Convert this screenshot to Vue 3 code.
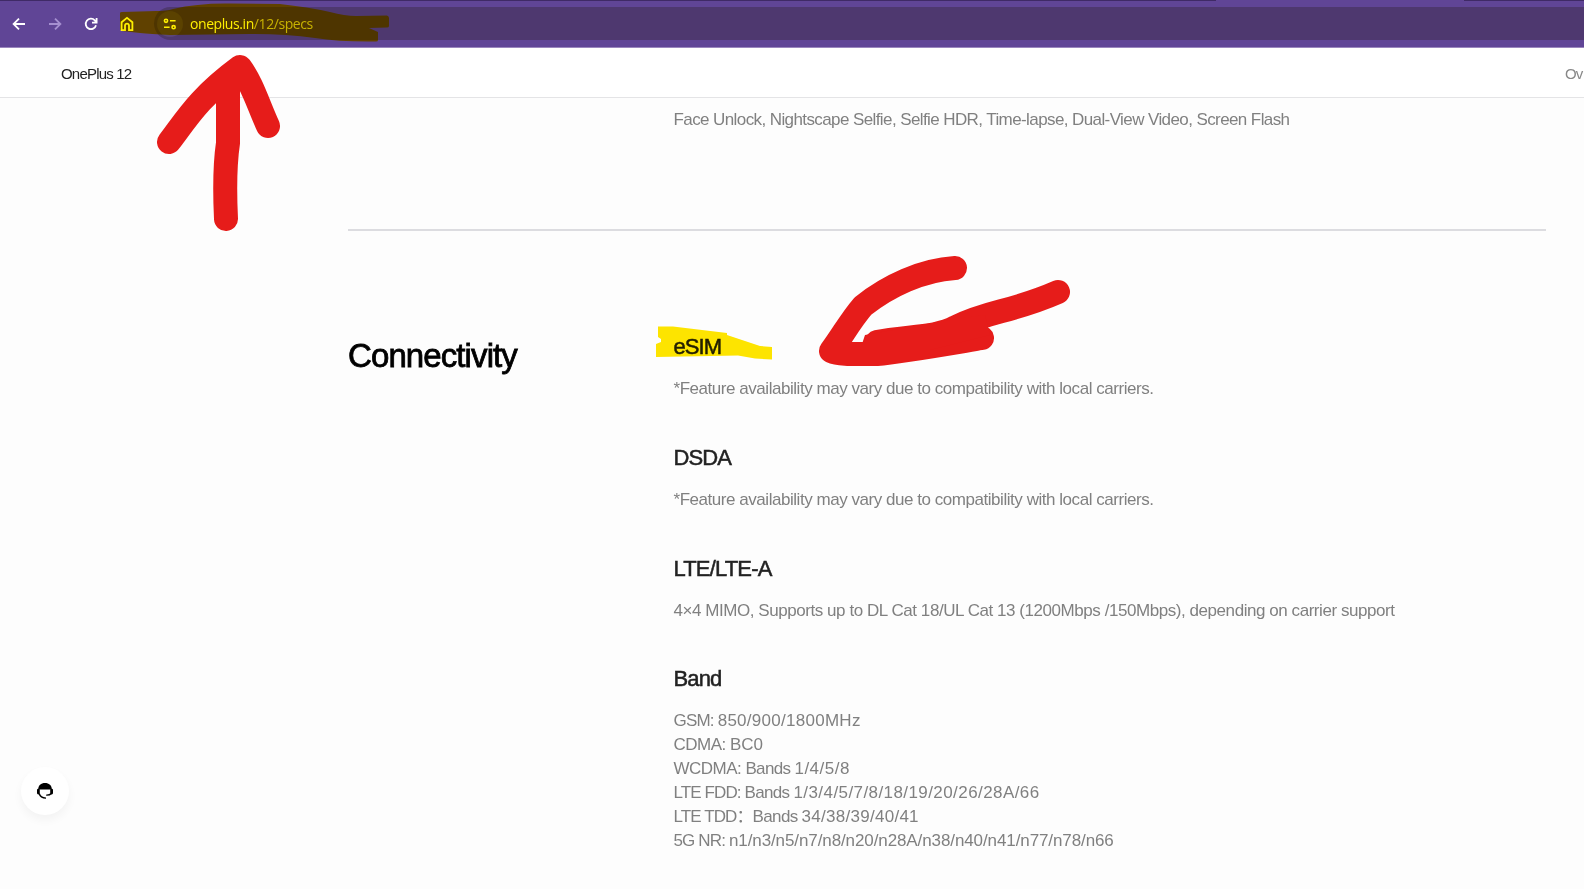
<script setup>
// Each line is a list of [text, letter spacing in px].
const notice = ['*Feature availability may vary due to compatibility with local carriers.', -0.459]
const sections = [
  { title: 'eSIM', ls: -0.965, lines: [[notice]] },
  { title: 'DSDA', ls: -0.906, lines: [[notice]] },
  { title: 'LTE/LTE-A', ls: -0.839, lines: [[['4×4 MIMO, Supports up to DL Cat 18/UL Cat 13 (1200Mbps /150Mbps), depending on carrier support', -0.444]]] },
  { title: 'Band', ls: -0.848, lines: [
    [['GSM: ', -0.8], ['850/900/1800MHz', 0.27]],
    [['CDMA: ', -0.5], ['BC0', -0.1]],
    [['WCDMA: ', -0.52], ['Bands ', -0.65], ['1/4/5/8', 0.5]],
    [['LTE FDD: ', -0.9], ['Bands ', -0.65], ['1/3/4/5/7/8/18/19/20/26/28A/66', 0.42]],
    [['LTE TDD：', -0.9], ['Bands ', -0.65], ['34/38/39/40/41', 0.27]],
    [['5G NR: ', -0.85], ['n1/n3/n5/n7/n8/n20/n28A/n38/n40/n41/n77/n78/n66', -0.1]],
  ] },
]
</script>

<template>
  <div class="page">
    <header class="toolbar">
      <div class="tabs"><i class="tab-a"></i><i class="tab-b"></i></div>
      <nav class="controls">
        <svg width="14" height="14" viewBox="0 0 14 14"><path d="M13 7H2M7 1.6 1.6 7 7 12.4" /></svg>
        <svg class="dim" width="14" height="14" viewBox="0 0 14 14"><path d="M1 7h11M7 1.6 12.4 7 7 12.4" /></svg>
        <svg width="14" height="14" viewBox="0 0 14 14"><path d="M12 8.2A5.2 5.2 0 1 1 10.8 3.4L12.2 5M12.6 1v4.6H8" /></svg>
        <svg width="14" height="16" viewBox="0 0 14 16"><path d="M1.6 6.2 7 1.8l5.4 4.4v8H9V9.6a2 2 0 0 0-4 0v4.6H1.6z" /></svg>
      </nav>
      <div class="address">
        <span class="chip"><svg width="14" height="12" viewBox="0 0 14 12"><circle cx="3" cy="2.8" r="1.6" /><path d="M7 2.8h5.6M1 9.2h5.6" /><circle cx="10.6" cy="9.2" r="1.6" /></svg></span>
        <span class="url"><b>oneplus.in</b><em>/12/specs</em></span>
      </div>
    </header>
    <div class="subnav"><span class="product">OnePlus 12</span><span class="over">Ov</span></div>
    <main>
      <div class="row first"><p class="camera">Face Unlock, Nightscape Selfie, Selfie HDR, Time-lapse, Dual-View Video, Screen Flash</p></div>
      <div class="row conn">
        <h2>Connectivity</h2>
        <div class="specs">
          <section v-for="s in sections" :key="s.title">
            <h3 :style="{ letterSpacing: s.ls + 'px' }">{{ s.title }}</h3>
            <p v-for="(line, i) in s.lines" :key="i"><span v-for="part in line" :key="part[0]" :style="{ letterSpacing: part[1] + 'px' }">{{ part[0] }}</span></p>
          </section>
        </div>
      </div>
    </main>
    <button class="support"><svg width="16" height="18" viewBox="0 0 16 18"><path d="M1.2 7.6C1.2 3.3 4 1 8 1s6.8 2.3 6.800 6.600z" /><rect x="0" y="6.800" width="2.800" height="5.600" rx="1.300" /><rect x="13.200" y="6.800" width="2.800" height="5.600" rx="1.300" /><path class="line" d="M2.200 11.500c.8 3 3 4.600 6.800 4.600M14.200 11.500c-1 1.300-3 1.700-5 1.600" /></svg></button>
    <svg class="ink marker" width="1584" height="889" viewBox="0 0 1584 889">
      <path class="dark" d="M120 13Q120 12 122 12L156 11Q166 11 173 9Q198 3 230 3.500L280 4Q308 7 330 12Q345 16 356 16L387 15.500Q389 16 389 18V26Q389 27.500 387 27.500L369 28L378 32V40Q378 41.500 376 41.500Q340 42 315 38Q285 34 250 34L170 35Q150 34 140 33L122 31Q120 31 120 29Z" />
      <path d="M658 326.500L673 326.500L727 333L727 335L760 346L772 347V359.500L755 358.500L738 355.500L656 357V344L661 342V339L658 337Z" />
    </svg>
    <svg class="ink pen" width="1584" height="889" viewBox="0 0 1584 889">
      <path d="M169 142C186 120 198 98 240 67C252 83 258 104 268 126M228 85V143C224 170 225 198 226 219" />
      <path d="M955 268C922 270 888 286 863 306C850 321 843 335 831 351C840 355 855 354 877 354C900 352 940 345 982 338C950 340 910 341 877 342C905 336 937 338 956 327C990 310 1010 313 1058 292" />
      <path class="fill" d="M865 335 920 325 950 320 985 315 990 335 930 350 860 350Z" />
    </svg>
  </div>
</template>

<style>
html, body { margin: 0; overflow: hidden; background: #fdfdfd; }
</style>
<style scoped>
.page { position: relative; width: 1584px; height: 889px; overflow: hidden; background: #fdfdfd; font-family: "Liberation Sans", "Noto Sans CJK SC", sans-serif; }
.toolbar { position: relative; display: flex; align-items: center; box-sizing: border-box; height: 48px; background: #604596; border-bottom: 1px solid #9a86bd; }
.tabs { position: absolute; inset: 0 0 auto; height: 1px; display: flex; justify-content: space-between; }
.tab-a { width: 1216px; background: #3f2a66; }
.tab-b { width: 120px; background: #3f2a66; }
.controls { display: flex; align-items: center; gap: 22px; padding-left: 12px; width: 142px; }
.controls svg { flex: none; fill: none; stroke: #fff; stroke-width: 1.8; }
.controls .dim { stroke: #a58fd0; }
.address { display: flex; align-items: center; flex: 1; height: 33px; border-radius: 17px 0 0 17px; background: #4e386f; }
.chip { display: flex; align-items: center; justify-content: center; width: 26px; height: 26px; margin-left: 3px; border-radius: 13px; background: #5b467b; }
.chip svg { fill: none; stroke: #fff; stroke-width: 1.6; }
.url { margin-left: 7px; font: 14px/20px "Open Sans", sans-serif; letter-spacing: -.42px; white-space: nowrap; color: #fff; }
.url b, .url em { font-weight: 400; font-style: normal; }
.url em { color: #c7bdd3; }
.subnav { display: flex; justify-content: space-between; align-items: center; box-sizing: border-box; height: 50px; background: #fff; border-bottom: 1px solid #e4e4e6; padding: 2px 0 0 61px; white-space: nowrap; font-size: 15px; }
.product { color: #222; letter-spacing: -.8px; }
.over { width: 19px; color: #888; letter-spacing: -.8px; }
.row { margin-left: 348px; width: 1198px; }
.row p { margin: 0; font-size: 17px; line-height: 24px; color: #808080; white-space: pre; }
.row .camera { letter-spacing: -.594px; }
.first { box-sizing: border-box; height: 133px; padding: 10px 0 0 325.5px; border-bottom: 2px solid #dcdce0; }
.conn { display: flex; padding-top: 100px; }
h2 { margin: 5px 0 0; width: 325.5px; font-size: 33px; line-height: 40px; letter-spacing: -.9px; font-weight: 400; color: #000; -webkit-text-stroke: .8px #000; }
h3 { margin: 0 0 14px; font-size: 22px; line-height: 32px; font-weight: 400; color: #222; -webkit-text-stroke: .5px #222; }
section { margin-bottom: 40.8px; }
.support { position: absolute; left: 21px; top: 767px; width: 48px; height: 48px; padding: 0; border: 0; border-radius: 24px; display: flex; align-items: center; justify-content: center; background: #fff; box-shadow: 0 5px 10px rgba(0,0,0,.045); }
.support .line { fill: none; stroke: #000; stroke-width: 1.4; }
.ink { position: absolute; left: 0; top: 0; pointer-events: none; }
.marker { mix-blend-mode: multiply; fill: #ffe600; }
.marker .dark { fill: #fff000; }
.pen { fill: none; stroke: #e61c1a; stroke-width: 24; stroke-linecap: round; stroke-linejoin: round; }
.pen .fill { fill: #e61c1a; stroke: none; }
</style>
